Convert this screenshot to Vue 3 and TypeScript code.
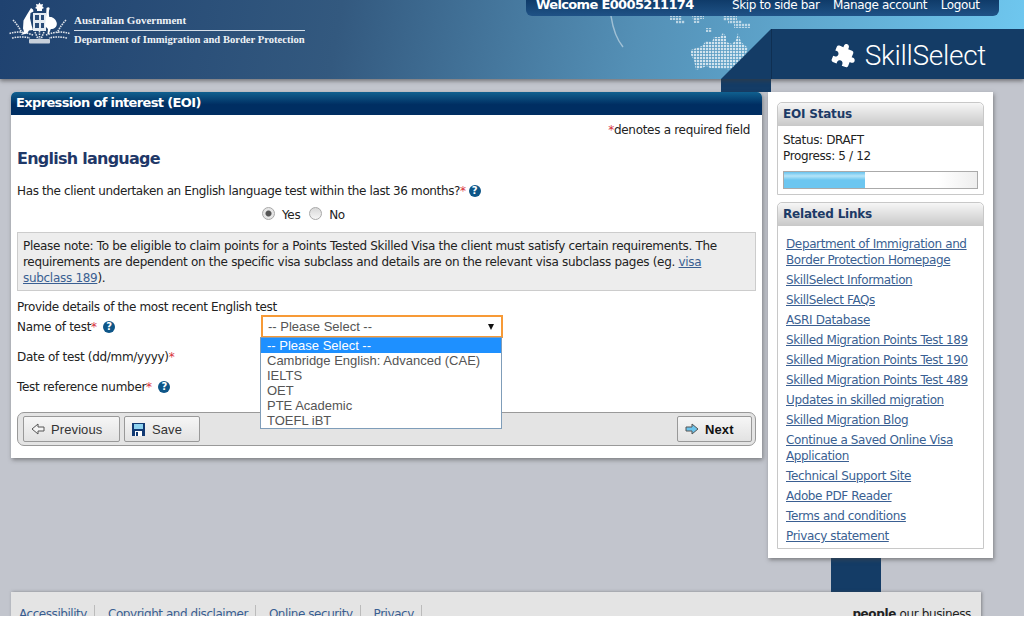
<template>
  <div class="page">
    <header class="top">
      <div class="gov">
        <svg class="crest" width="61" height="44" viewBox="9 2 61 44" fill="#fff">
          <path d="M39.5 2.5l1.2 2 2.3-.4-.6 2.3 1.6 1.6-2 .9V11h-5V8.9l-2-.9 1.6-1.6-.6-2.3 2.3.4z"/>
          <rect x="33" y="13" width="13" height="18" fill="#e4ebf2"/>
          <path d="M35 15h4v5h-4zM41 15h3v5h-3zM35 23h4v5h-4zM41 23h3v5h-3z" fill="#2a4c78"/>
          <path d="M31 8l2 1.500 .5 2-3 1.500-.5 5 1.500 7 1.500 5-4 .5-2 3-6 1.500 3-3.500-1-3 .5-8 3.500-6z"/>
          <path d="M46.500 8c2-1.500 3.500-.5 3 1-.8 1.500-.8 5-.2 8 3.500-.5 6.500 2 7.500 6 .3 4-2.500 6-6 6l-2 5h-1.300l.5-5-3-3 1-9z"/>
          <g fill="none" stroke="#fff" stroke-dasharray="1.6 .9" stroke-width="1.6" opacity=".85">
            <path d="M9.500 33.500Q20 30 33 35"/>
            <path d="M13 20q5 5 9 13"/>
            <path d="M12 38q10-2 18 0"/>
            <path d="M69.500 33.500Q59 30 46 35"/>
            <path d="M66 20q-5 5-9 13"/>
            <path d="M67 38q-10-2-18 0"/>
            <path d="M39.500 31v8M35 32l3 7M44 32l-3 7"/>
          </g>
          <rect x="29" y="39" width="21" height="4.500" rx="1" opacity=".75"/>
        </svg>
        <div class="gov-text">
          <div class="gov-name">Australian Government</div>
          <div class="gov-dept">Department of Immigration and Border Protection</div>
        </div>
      </div>
      <svg class="globe" width="150" height="79" viewBox="0 0 150 79">
        <defs>
          <pattern id="dots" width="3" height="3" patternUnits="userSpaceOnUse">
            <rect width="2.200" height="2.200" fill="#fff"/>
          </pattern>
        </defs>
        <path d="M1 16q3 20 12 31" fill="none" stroke="#fff" stroke-opacity=".45" stroke-width="1.500"/>
        <path d="M60 16h12v4h3v4H66v-4h-6zM82 16h12v3h-4v4h-6zM113 16h14v4h5v3h8v5h-16v-4h-6v-3h-5zM96 28h6v4h-6z" fill="url(#dots)" opacity=".6"/>
        <path d="M81 50l11-4 4-5 6 1 2-5h6l3-4 3 3v6l6 2 4-4 2-7 3 9 7 6-8 22-30-2-3-2-11 4-2-10-3-5z" fill="url(#dots)" opacity=".72"/>
      </svg>
      <div class="top-right">
        <nav class="userbar">
          <strong class="welcome">Welcome E0005211174</strong>
          <a>Skip to side bar</a>
          <a>Manage account</a>
          <a>Logout</a>
        </nav>
        <div class="brand">
          <svg class="puzzle" width="25" height="25" viewBox="0 0 24 24" fill="#fff">
            <path d="M20.500 11H19V7c0-1.100-.9-2-2-2h-4V3.500C13 2.120 11.880 1 10.500 1S8 2.120 8 3.500V5H4c-1.100 0-1.990.9-1.990 2v3.800H3.500c1.490 0 2.700 1.210 2.700 2.700s-1.210 2.700-2.700 2.700H2V20c0 1.100.9 2 2 2h3.800v-1.500c0-1.490 1.210-2.700 2.700-2.700 1.490 0 2.700 1.210 2.700 2.700V22H17c1.100 0 2-.9 2-2v-4h1.500c1.380 0 2.500-1.120 2.500-2.500S21.880 11 20.500 11z"/>
          </svg>
          <span>SkillSelect</span>
        </div>
      </div>
    </header>

    <div class="strip-top"></div>

    <main class="content">
      <section class="card">
        <h1 class="card-title">Expression of interest (EOI)</h1>
        <div class="card-body">
          <p class="required"><span class="star">*</span>denotes a required field</p>
          <h2 class="section-title">English language</h2>
          <p class="question">
            Has the client undertaken an English language test within the last 36 months?<span class="star">*</span>
            <span class="help">?</span>
          </p>
          <div class="radios">
            <span class="radio checked"></span><span class="radio-label">Yes</span>
            <span class="radio"></span><span class="radio-label">No</span>
          </div>
          <div class="note">
            Please note: To be eligible to claim points for a Points Tested Skilled Visa the client must satisfy certain requirements. The requirements are dependent on the specific visa subclass and details are on the relevant visa subclass pages (eg. <a>visa subclass 189</a>).
          </div>
          <p class="provide">Provide details of the most recent English test</p>
          <div class="form">
            <div class="row">
              <label>Name of test<span class="star">*</span> <span class="help">?</span></label>
              <div class="select-wrap">
                <div class="select">
                  <span>-- Please Select --</span>
                  <span class="caret"></span>
                </div>
                <ul class="options">
                  <li v-for="(o, i) in testOptions" :key="o" :class="{ active: i === 0 }">{{ o }}</li>
                </ul>
              </div>
            </div>
            <div class="row">
              <label>Date of test (dd/mm/yyyy)<span class="star">*</span></label>
            </div>
            <div class="row">
              <label>Test reference number<span class="star">*</span> <span class="help">?</span></label>
            </div>
          </div>
          <div class="actions">
            <button class="btn prev">
              <svg width="14" height="12" viewBox="0 0 14 12"><path d="M1 6l6-5v3h6v4H7v3z" fill="#f4f4f4" stroke="#555"/></svg>
              Previous
            </button>
            <button class="btn save">
              <svg width="13" height="13" viewBox="0 0 13 13">
                <path d="M0 0h13v13H0z" fill="#123a73"/>
                <path d="M2 1h9v5H2z" fill="#8fd3f0"/>
                <path d="M3 8h7v5H3z" fill="#fff"/>
                <path d="M4 9h2v4H4z" fill="#123a73"/>
              </svg>
              Save
            </button>
            <button class="btn next">
              <svg width="14" height="12" viewBox="0 0 14 12"><path d="M13 6L7 1v3H1v4h6v3z" fill="#6cc4ec" stroke="#555"/></svg>
              Next
            </button>
          </div>
        </div>
      </section>

      <aside class="side">
        <div class="panel">
          <h3>EOI Status</h3>
          <div class="panel-body status">
            <div>Status: DRAFT</div>
            <div>Progress: 5 / 12</div>
            <div class="progress"><div class="bar" :style="{ width: progress + '%' }"></div></div>
          </div>
        </div>
        <div class="panel">
          <h3>Related Links</h3>
          <ul class="panel-body links">
            <li v-for="l in links" :key="l"><a>{{ l }}</a></li>
          </ul>
        </div>
      </aside>
    </main>

    <div class="strip-bottom"></div>

    <footer class="foot">
      <nav class="foot-links">
        <a v-for="f in footerLinks" :key="f">{{ f }}</a>
      </nav>
      <div class="motto"><strong>people</strong> our business</div>
    </footer>
  </div>
</template>

<script setup lang="ts">
const progress = 42

const testOptions: string[] = [
  '-- Please Select --',
  'Cambridge English: Advanced (CAE)',
  'IELTS',
  'OET',
  'PTE Academic',
  'TOEFL iBT',
]

const links: string[] = [
  'Department of Immigration and Border Protection Homepage',
  'SkillSelect Information',
  'SkillSelect FAQs',
  'ASRI Database',
  'Skilled Migration Points Test 189',
  'Skilled Migration Points Test 190',
  'Skilled Migration Points Test 489',
  'Updates in skilled migration',
  'Skilled Migration Blog',
  'Continue a Saved Online Visa Application',
  'Technical Support Site',
  'Adobe PDF Reader',
  'Terms and conditions',
  'Privacy statement',
]

const footerLinks: string[] = ['Accessibility', 'Copyright and disclaimer', 'Online security', 'Privacy']
</script>

<style>
html, body {
  margin: 0;
  height: 623px;
  overflow: hidden;
  background: #fff;
}
</style>

<style scoped>
.page {
  height: 616px;
  overflow: hidden;
  background: #c2c5cd;
  font-family: "DejaVu Sans", Verdana, sans-serif;
  font-size: 12px;
  letter-spacing: -0.37px;
  color: #222;
}
a {
  color: #3a5f92;
  text-decoration: underline;
}
.star {
  color: #d8323c;
}

/* banner */
.top {
  position: relative;
  height: 79px;
  display: flex;
  justify-content: space-between;
  background: linear-gradient(100deg, #1f4270 0%, #33597f 33%, #5490b6 62%, #6fc8f0 100%);
  box-shadow: 0 2px 4px rgba(60, 60, 60, 0.6);
}
.gov {
  display: flex;
  align-items: flex-start;
  gap: 4px;
  padding: 2px 0 0 9px;
}
.gov-text {
  padding-top: 12px;
  font-family: "Liberation Serif", serif;
  font-weight: bold;
  color: #eef2f6;
  font-size: 10.6px;
  letter-spacing: 0;
  white-space: nowrap;
}
.gov-name {
  padding-bottom: 3px;
  border-bottom: 1px solid #d5dfe9;
  font-size: 11px;
  line-height: 13px;
}
.gov-dept {
  padding-top: 2px;
  line-height: 13px;
}
.globe {
  position: absolute;
  left: 610px;
  top: 0;
}
.top-right {
  position: relative;
  display: flex;
  flex-direction: column;
  align-items: flex-end;
}
.userbar {
  width: 473px;
  height: 16px;
  margin-right: 25px;
  box-sizing: border-box;
  padding-left: 10px;
  display: flex;
  align-items: flex-start;
  background: linear-gradient(#0f3b69, #1f5286);
  border-radius: 0 0 6px 6px;
  color: #fff;
  line-height: 16px;
  white-space: nowrap;
  overflow: hidden;
}
.userbar a {
  color: #fff;
  text-decoration: none;
  margin-top: -3px;
  margin-right: 13.5px;
}
.userbar .welcome {
  width: 196px;
  margin-top: -3px;
  font-size: 13px;
  letter-spacing: -0.65px;
}
.brand {
  position: relative;
  margin-top: 13px;
  width: 253px;
  height: 50px;
  box-sizing: border-box;
  padding: 9px 38px 0 0;
  display: flex;
  justify-content: flex-end;
  align-items: flex-start;
  gap: 8px;
  background: #143c66;
  border-left: 1px solid #0f2f52;
  color: #fff;
  font-family: Roboto, sans-serif;
  font-weight: 300;
  font-size: 28px;
  line-height: 36px;
  letter-spacing: -0.3px;
}
.puzzle {
  margin-top: 5px;
  transform: rotate(22deg);
}
.brand::before {
  content: "";
  position: absolute;
  left: -51px;
  top: 0;
  border-style: solid;
  border-width: 0 0 50px 50px;
  border-color: transparent transparent #143c66 transparent;
}
.strip-top {
  margin-left: 721px;
  width: 50px;
  height: 13px;
  background: #143c66;
}

/* main */
.content {
  display: flex;
  align-items: flex-start;
  gap: 6px;
  padding-left: 11px;
}
.card {
  width: 751px;
  height: 366px;
  background: #fff;
  box-shadow: 1px 2px 4px rgba(70, 70, 70, 0.55);
  border-radius: 5px 5px 0 0;
}
.card-title {
  margin: 0;
  height: 23px;
  padding-left: 5px;
  background: linear-gradient(#10608f, #002e62 55%);
  border-radius: 5px 5px 0 0;
  color: #fff;
  font-size: 13px;
  font-weight: bold;
  letter-spacing: -0.64px;
  line-height: 21px;
}
.card-body {
  padding: 0 6px;
}
.required {
  margin: 0;
  padding: 8px 6px 0 0;
  text-align: right;
  letter-spacing: -0.3px;
  line-height: 15px;
}
.section-title {
  margin: 11px 0 0;
  color: #1f3868;
  font-size: 16px;
  letter-spacing: -0.75px;
  line-height: 20px;
  font-weight: bold;
}
.question {
  margin: 14px 0 0;
  line-height: 16px;
}
.help {
  display: inline-block;
  width: 12px;
  height: 12px;
  border-radius: 50%;
  background: #0e5688;
  color: #fff;
  font-size: 10px;
  font-weight: bold;
  letter-spacing: 0;
  line-height: 12px;
  text-align: center;
  margin-left: 3px;
  vertical-align: 1px;
}
.radios {
  display: flex;
  align-items: center;
  height: 16px;
  margin: 8px 0 0 245px;
}
.radio {
  box-sizing: border-box;
  width: 13px;
  height: 13px;
  border-radius: 50%;
  border: 1px solid #a8a8a8;
  background: linear-gradient(#d8d8d8, #f6f6f6);
  margin-top: -3px;
}
.radio.checked {
  background: radial-gradient(circle, #555 0 2.5px, #e6e6e6 3.5px);
}
.radio-label {
  margin: 0 9px 0 7px;
}
.note {
  margin-top: 9px;
  padding: 5px 30px 4px 5px;
  border: 1px solid #ccc;
  background: #ededed;
  letter-spacing: -0.3px;
  line-height: 16px;
}
.provide {
  margin: 8px 0 0;
  line-height: 16px;
}
.form {
  display: flex;
  flex-direction: column;
  padding-top: 2px;
}
.row {
  display: flex;
  height: 30px;
}
.row label {
  width: 244px;
  letter-spacing: -0.3px;
  line-height: 21px;
}
.select-wrap {
  position: relative;
  margin-top: -2px;
}
.select {
  box-sizing: border-box;
  width: 242px;
  height: 23px;
  border: 2px solid #f79a36;
  display: flex;
  align-items: center;
  justify-content: space-between;
  padding: 0 7px 0 5px;
  font-family: "Liberation Sans", Arial, sans-serif;
  font-size: 13px;
  letter-spacing: 0;
  color: #555;
  background: #fff;
}
.caret {
  border-style: solid;
  border-width: 6px 3.5px 0;
  border-color: #111 transparent transparent;
}
.options {
  position: absolute;
  left: -1px;
  top: 22px;
  z-index: 2;
  box-sizing: border-box;
  width: 242px;
  margin: 0;
  padding: 0;
  list-style: none;
  background: #fff;
  border: 1px solid #7f9db9;
  font-family: "Liberation Sans", Arial, sans-serif;
  font-size: 13px;
  letter-spacing: 0;
  line-height: 15px;
  color: #555;
}
.options li {
  padding-left: 6px;
}
.options li.active {
  background: #1e90ff;
  color: #fff;
}
.actions {
  box-sizing: border-box;
  display: flex;
  gap: 4px;
  height: 34px;
  margin-top: 5px;
  padding: 3px 3px 0 5px;
  background: #e4e4e4;
  border: 1px solid #999;
  border-radius: 7px;
}
.btn {
  box-sizing: border-box;
  height: 26px;
  display: inline-flex;
  align-items: center;
  gap: 7px;
  padding: 0 0 0 7px;
  border: 1px solid #999;
  border-radius: 2px;
  background: linear-gradient(#f6f6f6, #e2e2e2);
  font-family: "Liberation Sans", Arial, sans-serif;
  font-size: 13px;
  letter-spacing: 0.1px;
  color: #333;
}
.btn.prev {
  width: 97px;
  gap: 6px;
}
.btn.save {
  width: 76px;
}
.btn.next {
  width: 75px;
  gap: 6px;
  margin-left: auto;
  font-weight: bold;
  color: #111;
}

/* side column */
.side {
  box-sizing: border-box;
  width: 225px;
  height: 466px;
  padding: 10px 9px 0;
  background: #fff;
  box-shadow: 1px 2px 4px rgba(70, 70, 70, 0.55);
  display: flex;
  flex-direction: column;
  gap: 7px;
}
.panel {
  border: 1px solid #c8c8c8;
  border-radius: 5px 5px 0 0;
}
.panel h3 {
  margin: 0;
  height: 23px;
  padding-left: 5px;
  background: linear-gradient(#f6f6f6, #c8c8c8);
  border-radius: 5px 5px 0 0;
  color: #1c3a66;
  font-size: 12px;
  font-weight: bold;
  letter-spacing: -0.2px;
  line-height: 23px;
}
.panel-body {
  margin: 0;
  list-style: none;
}
.status {
  padding: 6px 5px 5px;
  line-height: 16px;
}
.progress {
  height: 18px;
  margin-top: 7px;
  box-sizing: border-box;
  border: 1px solid #aaa;
  background: linear-gradient(90deg, #fff 80%, #eee);
}
.bar {
  height: 100%;
  background: linear-gradient(#68c3ee 0%, #b5e4f8 25%, #6cc6f0 50%);
}
.links {
  padding: 10px 8px 4px;
  display: flex;
  flex-direction: column;
  gap: 4px;
  line-height: 16px;
}

/* footer */
.strip-bottom {
  margin-left: 831px;
  width: 50px;
  height: 34px;
  background: #143c66;
}
.foot {
  margin-left: 11px;
  width: 970px;
  height: 60px;
  box-sizing: border-box;
  padding: 13px 10px 0 8px;
  display: flex;
  justify-content: space-between;
  background: #e4e4e4;
  box-shadow: 1px 0 3px rgba(70, 70, 70, 0.5);
}
.foot-links {
  display: flex;
  letter-spacing: -0.45px;
}
.foot-links a {
  height: 18px;
  line-height: 18px;
  padding-right: 7px;
  margin-right: 13px;
  border-right: 1px solid #bbb;
}
.motto {
  line-height: 18px;
  color: #222;
}
</style>
